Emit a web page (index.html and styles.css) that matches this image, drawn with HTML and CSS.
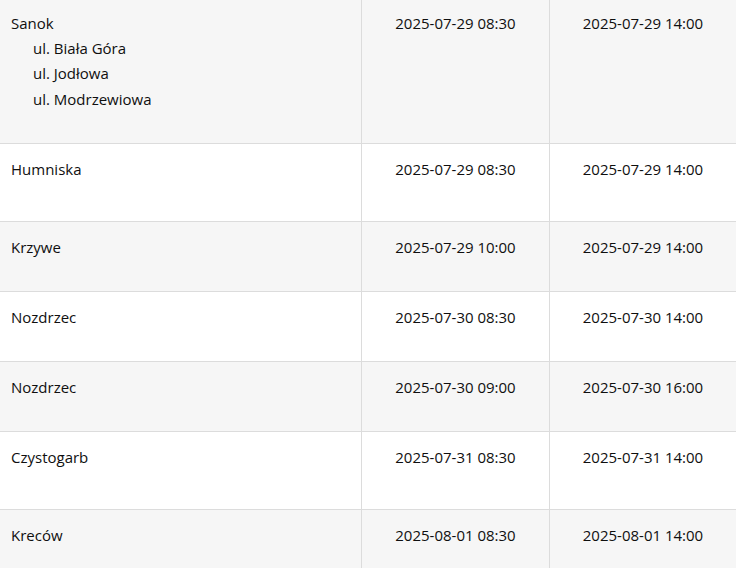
FILE: index.html
```html
<!DOCTYPE html>
<html lang="pl">
<head>
<meta charset="utf-8">
<title>Wyłączenia</title>
<link rel="stylesheet" href="styles.css">
</head>
<body>
<table class="schedule">
  <colgroup>
    <col class="col-place">
    <col class="col-start">
    <col class="col-end">
  </colgroup>
  <tbody>
    <tr class="row-alt first">
      <td class="place">Sanok
        <ul class="streets">
          <li>ul. Biała Góra</li>
          <li>ul. Jodłowa</li>
          <li>ul. Modrzewiowa</li>
        </ul>
      </td>
      <td class="time">2025-07-29 08:30</td>
      <td class="time">2025-07-29 14:00</td>
    </tr>
    <tr class="tall">
      <td class="place">Humniska</td>
      <td class="time">2025-07-29 08:30</td>
      <td class="time">2025-07-29 14:00</td>
    </tr>
    <tr class="row-alt">
      <td class="place">Krzywe</td>
      <td class="time">2025-07-29 10:00</td>
      <td class="time">2025-07-29 14:00</td>
    </tr>
    <tr>
      <td class="place">Nozdrzec</td>
      <td class="time">2025-07-30 08:30</td>
      <td class="time">2025-07-30 14:00</td>
    </tr>
    <tr class="row-alt">
      <td class="place">Nozdrzec</td>
      <td class="time">2025-07-30 09:00</td>
      <td class="time">2025-07-30 16:00</td>
    </tr>
    <tr class="tall">
      <td class="place">Czystogarb</td>
      <td class="time">2025-07-31 08:30</td>
      <td class="time">2025-07-31 14:00</td>
    </tr>
    <tr class="row-alt">
      <td class="place">Kreców</td>
      <td class="time">2025-08-01 08:30</td>
      <td class="time">2025-08-01 14:00</td>
    </tr>
  </tbody>
</table>
</body>
</html>
```
FILE: styles.css
```css
html, body {
  margin: 0;
  padding: 0;
  background: #ffffff;
}

body {
  font-family: "Open Sans", "Noto Sans", sans-serif;
  font-size: 15px;
  color: #0f0f0f;
}

.schedule {
  width: 736px;
  table-layout: fixed;
  border-collapse: separate;
  border-spacing: 0;
}

.col-place { width: 361px; }
.col-start { width: 188px; }
.col-end { width: 187px; }

.schedule td {
  vertical-align: top;
  padding: 13px 11px 31px;
  line-height: 25px;
  border-bottom: 1px solid #dcdcdc;
}

.schedule td + td {
  border-left: 1px solid #dcdcdc;
}

.schedule .first td {
  padding-top: 11px;
  padding-bottom: 31px;
}

.schedule .tall td {
  padding-bottom: 39px;
}

.row-alt td {
  background: #f6f6f6;
}

.time {
  text-align: center;
}

.streets {
  list-style: none;
  margin: 0;
  padding: 0 0 0 22px;
}

.streets li {
  line-height: 25.4px;
}
```
